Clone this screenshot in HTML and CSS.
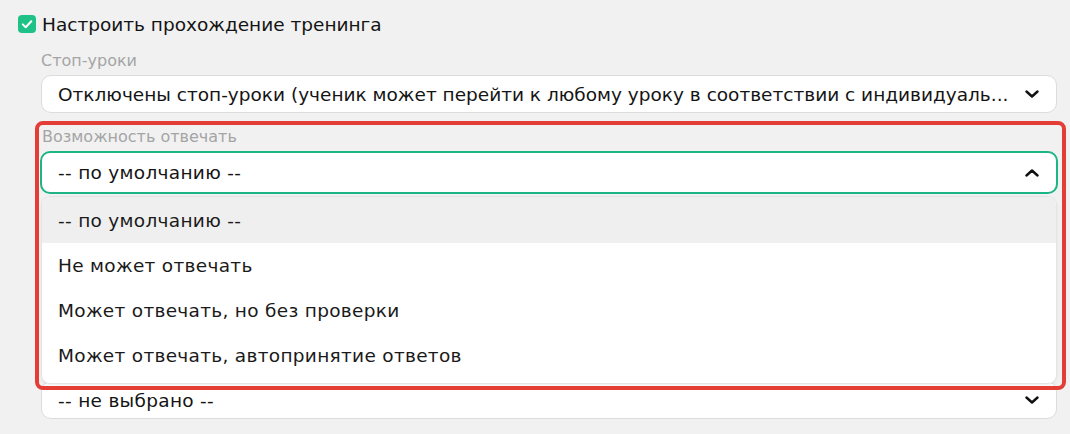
FILE: index.html
```html
<!DOCTYPE html>
<html lang="ru">
<head>
<meta charset="utf-8">
<link rel="stylesheet" href="styles.css">
</head>
<body>
<div class="page">
  <label class="check-row">
    <span class="checkbox">
      <svg viewBox="0 0 18 18" width="18" height="18"><path d="M4.8 9.4l2.9 2.8L13.3 6.2" fill="none" stroke="#fff" stroke-width="2" stroke-linecap="round" stroke-linejoin="round"/></svg>
    </span>
    <span class="check-text">Настроить прохождение тренинга</span>
  </label>

  <div class="fields">
    <div class="field">
      <div class="label">Стоп-уроки</div>
      <div class="select">
        <span class="select-text">Отключены стоп-уроки (ученик может перейти к любому уроку в соответствии с индивидуаль...</span>
        <svg class="chev" viewBox="0 0 14 8" width="14" height="8"><path d="M1.5 1.5L7 6.5l5.5-5" fill="none" stroke="#111" stroke-width="2.4" stroke-linecap="round" stroke-linejoin="round"/></svg>
      </div>
    </div>

    <div class="field field-open">
      <div class="label">Возможность отвечать</div>
      <div class="select select-focus">
        <span class="select-text short">-- по умолчанию --</span>
        <svg class="chev" viewBox="0 0 14 8" width="14" height="8"><path d="M1.5 6.5L7 1.5l5.5 5" fill="none" stroke="#111" stroke-width="2.4" stroke-linecap="round" stroke-linejoin="round"/></svg>
      </div>
      <ul class="dropdown">
        <li class="opt opt-active">-- по умолчанию --</li>
        <li class="opt">Не может отвечать</li>
        <li class="opt">Может отвечать, но без проверки</li>
        <li class="opt">Может отвечать, автопринятие ответов</li>
      </ul>
      <div class="highlight"></div>
    </div>

    <div class="field">
      <div class="label"></div>
      <div class="select"></div>
    </div>
    <div class="field">
      <div class="label"></div>
      <div class="select"></div>
    </div>
    <div class="field">
      <div class="label"></div>
      <div class="select">
        <span class="select-text short">-- не выбрано --</span>
        <svg class="chev" viewBox="0 0 14 8" width="14" height="8"><path d="M1.5 1.5L7 6.5l5.5-5" fill="none" stroke="#111" stroke-width="2.4" stroke-linecap="round" stroke-linejoin="round"/></svg>
      </div>
    </div>
  </div>
</div>
</body>
</html>
```

FILE: styles.css
```css
* { box-sizing: border-box; }
html, body { margin: 0; padding: 0; }
body {
  background: #f1f1f1;
  font-family: "DejaVu Sans", "Noto Sans", sans-serif;
  color: #141414;
  width: 1070px;
  height: 434px;
  overflow: hidden;
}
.page {
  padding: 15px 0 0 18px;
}
.check-row {
  display: flex;
  align-items: center;
  gap: 6px;
  height: 18px;
}
.checkbox {
  width: 18px;
  height: 18px;
  border-radius: 4px;
  background: #1ec186;
  display: flex;
}
.check-text {
  font-size: 18.5px;
}
.fields {
  margin: 19px 0 0 23px;
  width: 1016px;
  display: flex;
  flex-direction: column;
}
.field {
  position: relative;
  margin-bottom: 15px;
}
.label {
  font-size: 16px;
  color: #a5a5a5;
  height: 23px;
  line-height: 18px;
}
.select {
  height: 38px;
  background: #fff;
  border: 1px solid #dcdcdc;
  border-radius: 10px;
  display: flex;
  align-items: center;
  padding: 0 17px 0 16px;
}
.select-text {
  flex: 1;
  font-size: 18.5px;
  white-space: nowrap;
  overflow: hidden;
}
.select-text.short { letter-spacing: 0.3px; }
.chev { flex: none; margin-left: 12px; }
.select-focus {
  height: 43px;
  border: 2px solid #1db486;
  margin: 0 -1px;
  padding-left: 16px;
}
.field-open .label { padding-left: 1px; }
.dropdown {
  position: absolute;
  left: 1px;
  right: 1px;
  top: 69px;
  height: 186px;
  margin: 0;
  padding: 0;
  list-style: none;
  background: #fff;
  border-radius: 8px;
  box-shadow: 0 0 0 1px #e4e4e4, 0 2px 4px rgba(0,0,0,0.08);
  overflow: hidden;
  z-index: 5;
}
.opt {
  height: 45px;
  display: flex;
  align-items: center;
  padding-left: 16px;
  font-size: 18.5px;
  letter-spacing: 0.3px;
  color: #1a1a1a;
}
.opt-active { background: #efefef; height: 46px; }
.field:last-child { margin-top: -3px; }
.highlight {
  position: absolute;
  left: -6px;
  right: -9px;
  top: -7px;
  height: 269px;
  border: 4px solid #e33d36;
  border-radius: 8px;
  z-index: 6;
  pointer-events: none;
}
```
